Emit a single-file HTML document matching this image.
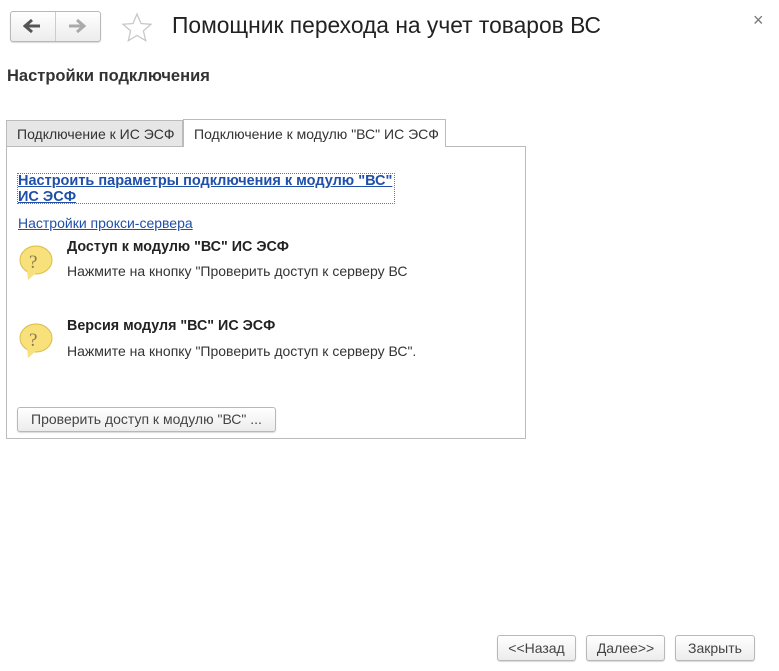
<!DOCTYPE html>
<html><head><meta charset="utf-8"><style>
body{margin:0;width:779px;height:671px;background:#fff;font-family:"Liberation Sans",Arial,sans-serif;font-size:14px;color:#333;position:relative;overflow:hidden}
.a{position:absolute;white-space:nowrap}
.btn{position:absolute;border:1px solid #b8b8b8;border-radius:3px;background:linear-gradient(#fff,#ececec);box-shadow:0 1px 1px rgba(0,0,0,.15);text-align:center;color:#444;box-sizing:border-box}
a{color:#1f4fa8;text-decoration:underline}
</style></head><body>
<div class="btn" style="left:10px;top:11px;width:91px;height:31px"></div>
<div class="a" style="left:55px;top:12px;width:1px;height:29px;background:#ccc"></div>
<svg class="a" style="left:23px;top:18px" width="20" height="16"><path d="M2 8h15M9 2L2 8l7 6" stroke="#555" stroke-width="3" fill="none"/></svg>
<svg class="a" style="left:67px;top:18px" width="20" height="16"><path d="M2 8h15M10 2l7 6-7 6" stroke="#aaa" stroke-width="3" fill="none"/></svg>
<svg class="a" style="left:121px;top:12px" width="32" height="30"><path d="M16 2l4 9.5 10 .8-7.6 6.6 2.3 9.8L16 23.5l-8.7 5.2 2.3-9.8L2 12.3l10-.8z" fill="none" stroke="#c8c8c8" stroke-width="1.3"/></svg>
<div class="a" style="left:172px;top:12px;font-size:22.8px;color:#222">Помощник перехода на учет товаров ВС</div>
<div class="a" style="left:753px;top:10px;font-size:18px;color:#777">×</div>
<div class="a" style="left:7px;top:67px;font-size:16.5px;font-weight:bold;color:#333">Настройки подключения</div>
<div class="a" style="left:6px;top:146px;width:520px;height:293px;border:1px solid #bbb;box-sizing:border-box"></div>
<div class="a" style="left:6px;top:120px;width:177px;height:27px;border:1px solid #bbb;background:#e6e6e6;box-sizing:border-box;padding:5px 0 0 10px">Подключение к ИС ЭСФ</div>
<div class="a" style="left:183px;top:119px;width:263px;height:28px;border:1px solid #bbb;border-bottom:none;background:#fff;box-sizing:border-box;padding:6px 0 0 10px">Подключение к модулю "ВС" ИС ЭСФ</div>
<div class="a" style="left:17px;top:173px;width:378px;height:31px;border:1px dotted #777;box-sizing:border-box"></div>
<div class="a" style="left:18px;top:173px;font-weight:bold;line-height:16px;font-size:14.5px"><a>Настроить параметры подключения к модулю "ВС"</a><br><a>ИС ЭСФ</a></div>
<div class="a" style="left:18px;top:215px"><a>Настройки прокси-сервера</a></div>
<svg class="a" style="left:18px;top:244px" width="38" height="38"><ellipse cx="18" cy="16" rx="16" ry="14" fill="#f8e17a" stroke="#d9bd4a"/><path d="M9 26l1 10 8-7z" fill="#f8e17a"/><text x="11" y="24" font-size="19" fill="#8a7a50" font-family="Liberation Serif">?</text></svg>
<div class="a" style="left:67px;top:239px;font-weight:bold;color:#222;font-size:14.3px">Доступ к модулю "ВС" ИС ЭСФ</div>
<div class="a" style="left:67px;top:263px">Нажмите на кнопку "Проверить доступ к серверу ВС</div>
<svg class="a" style="left:18px;top:322px" width="38" height="38"><ellipse cx="18" cy="16" rx="16" ry="14" fill="#f8e17a" stroke="#d9bd4a"/><path d="M9 26l1 10 8-7z" fill="#f8e17a"/><text x="11" y="24" font-size="19" fill="#8a7a50" font-family="Liberation Serif">?</text></svg>
<div class="a" style="left:67px;top:318px;font-weight:bold;color:#222;font-size:14.3px">Версия модуля "ВС" ИС ЭСФ</div>
<div class="a" style="left:67px;top:343px">Нажмите на кнопку "Проверить доступ к серверу ВС".</div>
<div class="btn" style="left:17px;top:407px;width:259px;height:25px;line-height:23px">Проверить доступ к модулю "ВС" ...</div>
<div class="btn" style="left:497px;top:635px;width:79px;height:26px;line-height:24px">&lt;&lt;Назад</div>
<div class="btn" style="left:586px;top:635px;width:79px;height:26px;line-height:24px">Далее&gt;&gt;</div>
<div class="btn" style="left:675px;top:635px;width:80px;height:26px;line-height:24px">Закрыть</div>
</body></html>
